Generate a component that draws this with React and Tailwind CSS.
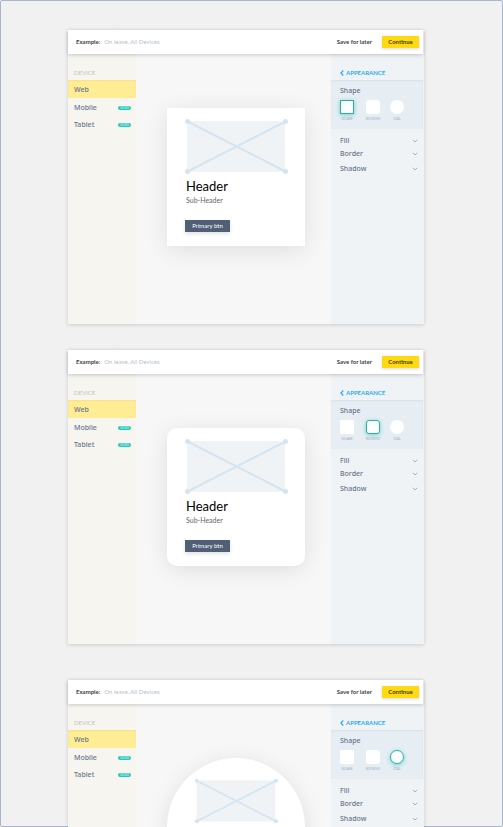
import React from "react";

const sans = "font-['Lato','Liberation_Sans',sans-serif]";
const noto = "font-['Noto_Sans','Liberation_Sans',sans-serif]";

const previewShape = {
  square: "rounded-none",
  rounded: "rounded-[10px]",
  oval: "rounded-full",
};

const swatches = [
  { value: "square", label: "SQUARE", radius: "rounded-none", cell: "w-[14px]" },
  { value: "rounded", label: "ROUNDED", radius: "rounded-[3px]", cell: "w-[14px] ml-3" },
  { value: "oval", label: "OVAL", radius: "rounded-full", cell: "w-[14px] ml-[10px]" },
];

function Chevron() {
  return (
    <svg width="6" height="4" viewBox="0 0 6 4" fill="none" stroke="#a3b1c4" aria-hidden="true">
      <path d="M0.8 0.8 L3 3 L5.2 0.8" />
    </svg>
  );
}

function ImagePlaceholder({ small }) {
  return (
    <svg
      viewBox="0 0 104 57"
      className={small ? "w-[84px] h-[46px] mt-5 mx-auto" : "w-[104px] h-[57px] ml-[17px] mt-[10px]"}
      preserveAspectRatio="none"
      aria-hidden="true"
    >
      <rect x="3" y="3" width="98" height="51" fill="#eff3f6" />
      <path d="M3.500 3.500 L101.500 53.500 M101.500 3.500 L3.500 53.500" stroke="#d4e5ef" strokeWidth="2" />
      <g fill="#d4e5ef">
        <circle cx="3.500" cy="3.500" r="2.500" />
        <circle cx="101.500" cy="3.500" r="2.500" />
        <circle cx="3.500" cy="53.500" r="2.500" />
        <circle cx="101.500" cy="53.500" r="2.500" />
      </g>
    </svg>
  );
}

function TopBar() {
  return (
    <header className="relative z-10 mr-px flex h-6 items-center bg-white pl-2 pr-1 text-[6px] leading-[8px] shadow-[0_1px_4px_rgba(0,0,0,0.2)]">
      <span className="font-bold text-[#444]">Example:</span>
      <span className="ml-1 text-[#b4bfd0]">On leave, All Devices</span>
      <button type="button" className="ml-auto font-bold text-[#444]">Save for later</button>
      <button type="button" className="ml-[10px] h-3 w-[37px] bg-[#ffd912] font-bold text-[#4a3f08] shadow-[0_1px_3px_rgba(0,0,0,0.15)]">
        Continue
      </button>
    </header>
  );
}

function DeviceRow({ name, active, done }) {
  return (
    <li>
      <button
        type="button"
        className={
          "flex w-full items-center justify-between pl-[6px] pr-[5px] text-[7px] leading-[10px] font-medium text-[#66758a] " +
          (active ? "mb-px h-[18px] pt-px bg-[#ffed96] shadow-[inset_0_1px_2px_rgba(190,150,0,0.12)]" : "h-[17px]")
        }
      >
        {name}
        {done && (
          <span className="flex h-1 w-[13px] items-center justify-center rounded-full bg-[#2bc8b8] text-[3px] leading-[4px] font-bold text-[#a4ebe2]">
            DONE
          </span>
        )}
      </button>
    </li>
  );
}

function DevicePanel() {
  return (
    <nav className={"w-[68px] shrink-0 bg-[#f6f5ef] pt-[14px] " + noto}>
      <h2 className={"pb-[2px] pl-[6px] text-[6px] leading-[10px] text-[#c4c4c4] " + sans}>DEVICE</h2>
      <ul>
        <DeviceRow name="Web" active />
        <DeviceRow name="Mobile" done />
        <DeviceRow name="Tablet" done />
      </ul>
    </nav>
  );
}

function Preview({ shape }) {
  const oval = shape === "oval";
  return (
    <main className="flex flex-1 justify-center bg-[#f7f7f7] pl-[5px] pt-[54px]">
      <article
        className={
          "h-[138px] w-[138px] overflow-hidden bg-white shadow-[0_4px_22px_rgba(0,0,0,0.1)] " + previewShape[shape]
        }
      >
        <ImagePlaceholder small={oval} />
        <div className={oval ? "flex flex-col items-center pt-1" : "pl-[19px]"}>
          <h3 className="mt-[3px] text-[13px] leading-4 text-black">Header</h3>
          <p className="mt-px text-[7px] leading-[10px] text-[#666]">Sub-Header</p>
          <button
            type="button"
            className="-ml-px mt-[15px] block h-3 w-[45px] bg-[#505f75] text-[6px] leading-[12px] text-white shadow-[0_2px_4px_rgba(0,0,0,0.12)]"
          >
            Primary btn
          </button>
        </div>
      </article>
    </main>
  );
}

function ShapePicker({ shape, name }) {
  return (
    <fieldset className="mr-px h-[49px] bg-[#e6eef4] pl-[9px] shadow-[inset_0_1px_2px_rgba(80,110,140,0.1)]">
      <legend className="float-left w-full pt-[6px] text-[7px] leading-[10px] font-medium text-[#66758a]">Shape</legend>
      <div className="clear-both flex pt-1">
        {swatches.map((s) => (
          <label key={s.value} className={"flex flex-col items-center " + s.cell}>
            <input
              type="radio"
              name={name}
              value={s.value}
              defaultChecked={s.value === shape}
              className={
                "block h-[14px] w-[14px] appearance-none border-white bg-white checked:border checked:border-[#1fb8ac] checked:shadow-[0_1px_4px_rgba(31,184,172,0.6)] " +
                s.radius
              }
            />
            <span className="mt-[3px] text-[3px] leading-[4px] text-[#a3adb8]">{s.label}</span>
          </label>
        ))}
      </div>
    </fieldset>
  );
}

function AccordionRow({ title, height }) {
  return (
    <button
      type="button"
      className={"flex w-full items-center justify-between pl-[9px] pr-[6px] text-[7px] leading-[10px] font-medium text-[#66758a] " + height}
    >
      {title}
      <Chevron />
    </button>
  );
}

function AppearancePanel({ shape, name }) {
  return (
    <aside className={"w-[93px] shrink-0 bg-[#eff3f6] pt-[14px] " + noto}>
      <a
        href="#appearance"
        className={"mb-[2px] flex h-[10px] items-center pl-[9px] text-[6px] leading-[10px] font-bold text-[#2caaf0] " + sans}
      >
        <svg width="4" height="6" viewBox="0 0 4 6" fill="none" stroke="currentColor" strokeWidth="1.200" className="mr-[2px]" aria-hidden="true">
          <path d="M3.300 0.500 L0.900 3 L3.300 5.500" />
        </svg>
        APPEARANCE
      </a>
      <ShapePicker shape={shape} name={name} />
      <div className="pt-[5px]">
        <AccordionRow title="Fill" height="h-[13px]" />
        <AccordionRow title="Border" height="h-[14px]" />
        <AccordionRow title="Shadow" height="h-[15px]" />
      </div>
    </aside>
  );
}

function Editor({ shape, name }) {
  return (
    <section className="min-h-[294px] shrink-0 flex flex-col bg-[#f7f7f7] shadow-[0_1px_4px_rgba(0,0,0,0.15)]">
      <TopBar />
      <div className="flex flex-1">
        <DevicePanel />
        <Preview shape={shape} />
        <AppearancePanel shape={shape} name={name} />
      </div>
    </section>
  );
}

export default function App() {
  return (
    <div className={"h-screen overflow-hidden bg-[#f1f1f1] " + sans}>
      <div className="flex h-full flex-col rounded-[2px] border border-[#a9b5cc] pl-[67px] pr-[78px] pt-[29px]">
        <Editor shape="square" name="shape-1" />
        <div className="h-[26px] shrink-0" />
        <Editor shape="rounded" name="shape-2" />
        <div className="h-9 shrink-0" />
        <Editor shape="oval" name="shape-3" />
      </div>
    </div>
  );
}
